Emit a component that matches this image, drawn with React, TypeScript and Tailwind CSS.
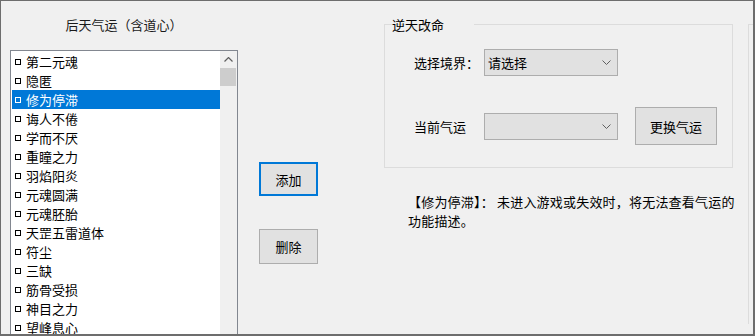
import { JSX } from "react";

const items = [
  "第二元魂",
  "隐匿",
  "修为停滞",
  "诲人不倦",
  "学而不厌",
  "重瞳之力",
  "羽焰阳炎",
  "元魂圆满",
  "元魂胚胎",
  "天罡五雷道体",
  "符尘",
  "三缺",
  "筋骨受损",
  "神目之力",
  "望峰息心",
];

function Chevron({ color = "#606060" }: { color?: string }): JSX.Element {
  return (
    <svg width="9" height="5" viewBox="0 0 9 5" fill="none">
      <path d="M0.5 0.5 L4.5 4.5 L8.5 0.5" stroke={color} strokeWidth="1" />
    </svg>
  );
}

export default function App(): JSX.Element {
  return (
    <div
      className="w-[755px] h-[336px] bg-[#f0f0f0] border-t border-l border-r-2 border-b-2 border-[#6d6d6d] overflow-hidden flex text-[13px] leading-[19px] text-black"
      style={{ fontFamily: '"Noto Sans CJK SC", "Noto Sans", sans-serif' }}
    >
      {/* left: list */}
      <div className="ml-[9px] w-[228px] shrink-0 flex flex-col">
        <div className="mt-[14px] h-[19px] text-center text-[#1a1a1a]">后天气运（含道心）</div>
        <div className="mt-[16px] h-[400px] bg-white border border-[#828790] flex">
          <div className="flex-1 pl-[1px] pt-[1px] flex flex-col">
            {items.map((it, i) => {
              const sel = i === 2;
              return (
                <div
                  key={it}
                  className={
                    sel
                      ? "h-[19px] flex items-center bg-[#0078d7] text-white pl-[3px]"
                      : "h-[19px] flex items-center pl-[3px]"
                  }
                >
                  <span
                    className={
                      sel
                        ? "w-[6px] h-[6px] border border-white mr-[5px] shrink-0"
                        : "w-[6px] h-[6px] border border-black mr-[5px] shrink-0"
                    }
                  />
                  <span className="whitespace-nowrap">{it}</span>
                </div>
              );
            })}
          </div>
          <div className="w-[17px] bg-[#f0f0f0] flex flex-col">
            <div className="h-[17px] flex items-center justify-center">
              <svg width="9" height="5" viewBox="0 0 9 5" fill="none">
                <path d="M0.5 4.5 L4.5 0.5 L8.5 4.5" stroke="#606060" strokeWidth="1.2" />
              </svg>
            </div>
            <div className="h-[18px] w-[16px] bg-[#cdcdcd]" />
          </div>
        </div>
      </div>

      {/* middle: buttons */}
      <div className="ml-[21px] w-[59px] shrink-0 flex flex-col">
        <button className="mt-[161px] h-[34px] bg-[#e1e1e1] border-2 border-[#0078d7] text-[13px]">添加</button>
        <button className="mt-[33px] h-[35px] bg-[#e1e1e1] border border-[#adadad] text-[13px]">删除</button>
      </div>

      {/* right */}
      <div className="ml-[66px] flex shrink-0">
        <div className="w-[349px] flex flex-col">
          <fieldset className="mt-[14px] h-[153px] border border-[#dcdcdc] pl-[29px]">
            <legend className="ml-[6px] -translate-x-[29px] px-[1px] leading-[19px]">逆天改命</legend>
            <div className="mt-[15px] flex items-center">
              <span className="w-[70px]">选择境界：</span>
              <div className="w-[134px] h-[27px] bg-[#e1e1e1] border border-[#adadad] flex items-center justify-between pl-[3px] pr-[6px]">
                <span>请选择</span>
                <Chevron />
              </div>
            </div>
            <div className="mt-[31px] flex items-center">
              <span className="w-[70px]">当前气运</span>
              <div className="w-[134px] h-[27px] bg-[#e1e1e1] border border-[#adadad] flex items-center justify-end pr-[6px]">
                <Chevron />
              </div>
              <button className="ml-[17px] w-[82px] h-[38px] bg-[#e1e1e1] border border-[#adadad] text-[13px]">
                更换气运
              </button>
            </div>
          </fieldset>
          <p className="mt-[24px] pl-[24px] whitespace-nowrap tracking-[0.2px]">
            【修为停滞】： 未进入游戏或失效时，将无法查看气运的
            <br />
            功能描述。
          </p>
        </div>
        <div className="ml-[15px] mt-[23px] w-[40px] h-[300px] border-l border-t border-[#dcdcdc]" />
      </div>
    </div>
  );
}
